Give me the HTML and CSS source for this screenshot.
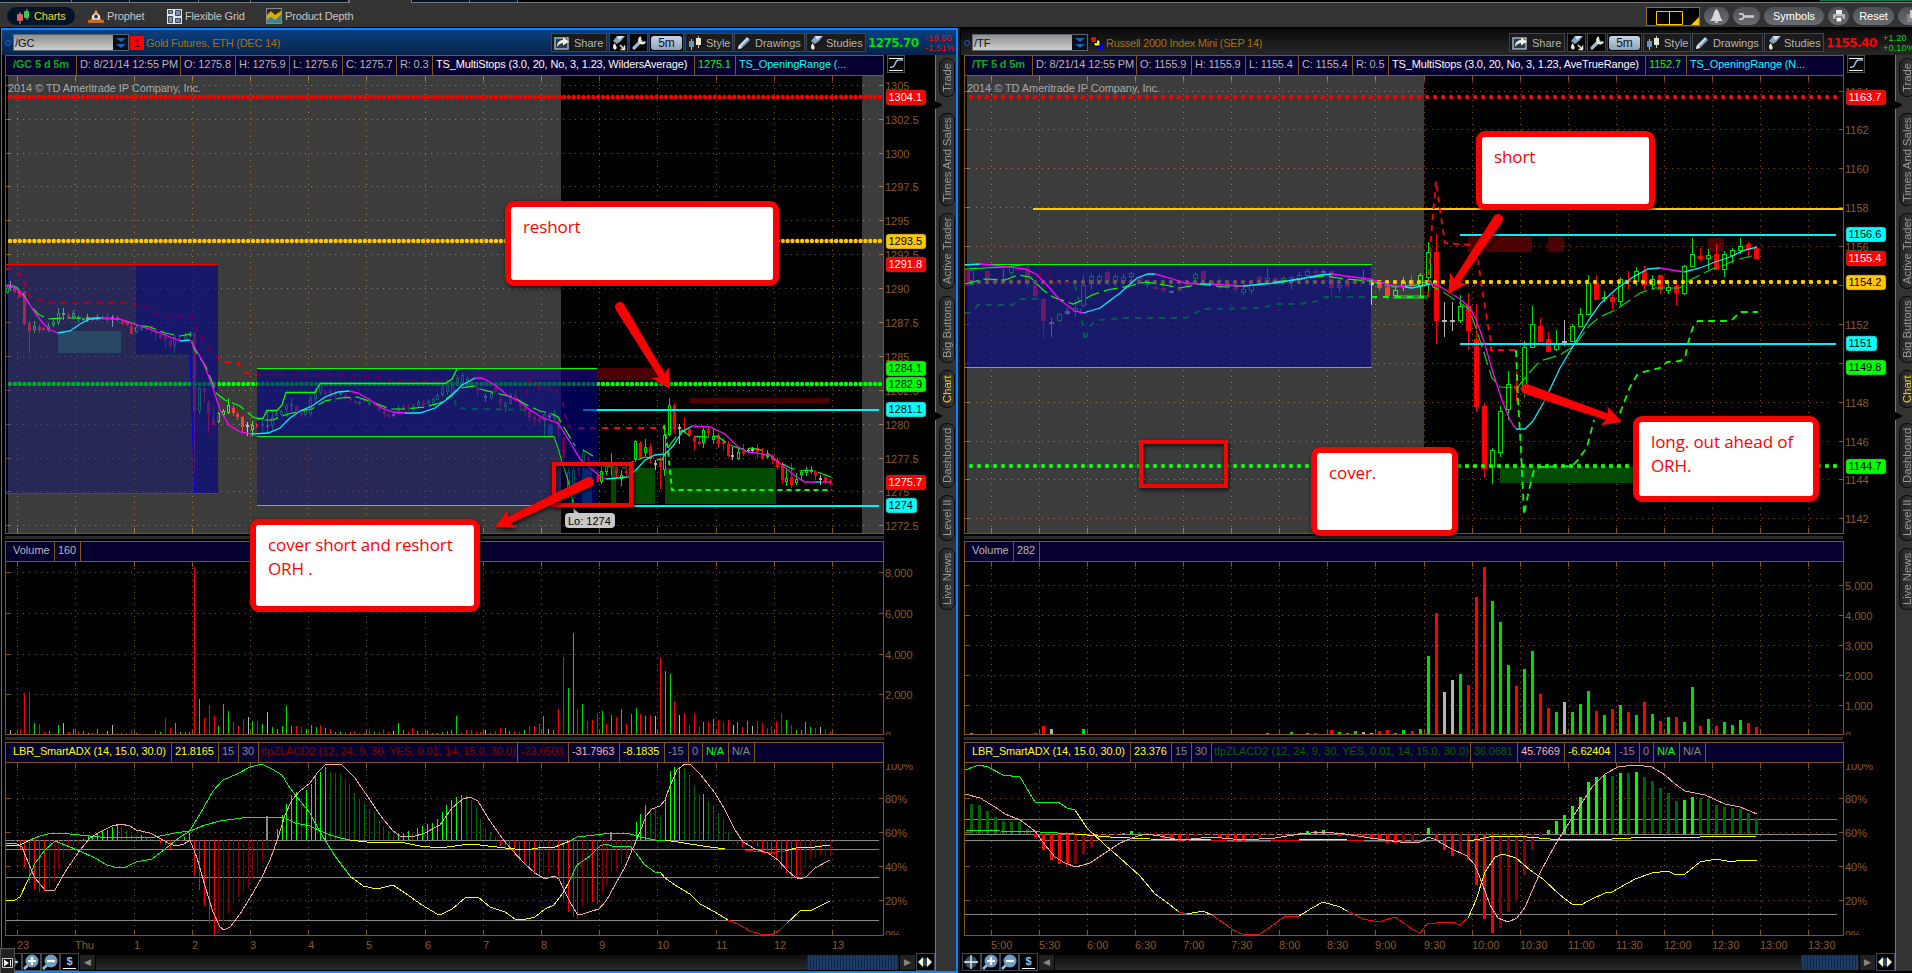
FILE: index.html
```
<!DOCTYPE html>
<html>
<head>
    <meta charset="utf-8">
    <title>Charts</title>
    <link rel="stylesheet" href="styles.css">
</head>
<body>
    <!-- Shared icons -->
    <svg class="defs" width="0" height="0">
        <symbol id="i-share" viewBox="0 0 16 14">
            <rect x="1" y="2" width="13" height="11" fill="#2b3c50" stroke="#9db4c8" stroke-width="1.5"/>
            <path d="M3 11C3 6 6 4 9 4V1.500l6 4-6 4V7C7 7 5 8 3 11z" fill="#f4f1dc"/>
        </symbol>
        <symbol id="i-spray" viewBox="0 0 16 16">
            <path d="M2 6L6 1h8l-4 5-4 3z" fill="#86a5c4"/>
            <path d="M6 1h7l-5 4z" fill="#d7e4ee"/>
            <path d="M3.500 8C1 12 2 14.500 4 14.500S6.500 12 3.500 8z" fill="#e9ecd8"/>
        </symbol>
        <symbol id="i-more" viewBox="0 0 16 16">
            <path d="M9 10l4 4M13.500 10.500v4h-4" stroke="#e9ecd8" stroke-width="1.500" fill="none"/>
        </symbol>
        <symbol id="i-wrench" viewBox="0 0 16 16">
            <path d="M3 13l7-7" stroke="#9fb8cf" stroke-width="3.200" stroke-linecap="round"/>
            <path d="M10 2.500a3 3 0 1 0 4 4" stroke="#e9ecd8" stroke-width="2.500" fill="none"/>
        </symbol>
        <symbol id="i-style" viewBox="0 0 14 14">
            <path d="M3.500 3v11M10.500 0v12" stroke="#b9c8d6" stroke-width="1"/>
            <rect x="1" y="5" width="5" height="6" fill="#6d93b8"/>
            <rect x="8" y="2" width="5" height="7" fill="#e6ead4"/>
        </symbol>
        <symbol id="i-pencil" viewBox="0 0 14 14">
            <path d="M1 13l1-4 8-8 3 3-8 8z" fill="#7ea4ca"/>
            <path d="M3 10l8-8" stroke="#dfe9f2" stroke-width="1.500"/>
            <path d="M1 13l1-4 3 3z" fill="#eee"/>
        </symbol>
        <symbol id="i-fit" viewBox="0 0 18 18">
            <rect x=".5" y=".5" width="17" height="17" fill="#000" stroke="#46535f"/>
            <path d="M2 3.500h14M2 15.500h14" stroke="#fffde0" stroke-width="1.200"/>
            <path d="M3 12c6 2 4-6 8-7h5" stroke="#8fc0ea" stroke-width="1.600" fill="none"/>
        </symbol>
        <symbol id="i-cross" viewBox="0 0 18 18">
            <circle cx="9" cy="9" r="6" fill="#33536f"/>
            <path d="M9 2v14M2 9h14" stroke="#f2f6e4" stroke-width="1.300"/>
        </symbol>
        <symbol id="i-plus" viewBox="0 0 18 18">
            <path d="M2 16l4-4" stroke="#9fc0dd" stroke-width="2.500"/>
            <circle cx="10" cy="8" r="6.500" fill="#6f9cc4"/>
            <path d="M10 4v8M6 8h8" stroke="#fffff0" stroke-width="2.200"/>
        </symbol>
        <symbol id="i-minus" viewBox="0 0 18 18">
            <path d="M2 16l4-4" stroke="#9fc0dd" stroke-width="2.500"/>
            <circle cx="10" cy="8" r="6.500" fill="#6f9cc4"/>
            <path d="M6 8h8" stroke="#fffff0" stroke-width="2.200"/>
        </symbol>
        <symbol id="i-expand" viewBox="0 0 18 18">
            <path d="M7 4v10L2 9zM11 4v10l5-5z" fill="#f0f4dd"/>
            <path d="M8 5v8M10 5v8" stroke="#5d8bbd"/>
        </symbol>
    </svg>

    <div class="tabstrip">
        <i class="tab"></i><i class="tab"></i><i class="tab"></i><i class="tab"></i><i class="tab"></i><i class="tab"></i>
        <i class="tab active"></i><i class="tab"></i><i class="tab"></i>
        <i class="strip-end"></i>
    </div>

    <div class="toolbar">
        <a class="tool selected">
            <svg width="15" height="15" viewBox="0 0 15 15"><path d="M4 3v12M11 0v11" stroke="#aaa"/><rect x="1" y="5" width="6" height="7" rx="1" fill="#e0605c"/><rect x="8" y="2" width="5" height="7" rx="1" fill="#35c94a"/></svg>
            Charts
        </a>
        <a class="tool prophet">
            <svg width="16" height="16" viewBox="0 0 16 16"><path d="M8 1l6 12H2z" fill="#e3b45c" stroke="#7a4a14"/><rect x="0" y="12" width="16" height="3" fill="#c96b22"/><ellipse cx="8" cy="8.500" rx="4" ry="2.500" fill="#fff"/><circle cx="8" cy="8.500" r="2" fill="#235"/></svg>
            Prophet
        </a>
        <a class="tool grid">
            <svg width="15" height="15" viewBox="0 0 15 15"><rect width="15" height="15" fill="#dfe6ee"/><path d="M1.500 1.500h4v3h-4zM8.500 1.500h5v5h-5zM1.500 7.500h4v6h-4zM8.500 9.500h5v4h-5z" fill="#7f8fa3" stroke="#3d4a5a"/></svg>
            Flexible Grid
        </a>
        <a class="tool depth">
            <svg width="16" height="16" viewBox="0 0 16 16"><rect x=".5" y=".5" width="15" height="15" fill="#2c2c22" stroke="#888"/><path d="M1 12l4-3 4 2 6-4v8H1z" fill="#3c8290"/><path d="M1 7l4-4 4 4 6-4v4l-6 5-4-3-4 3z" fill="#dba90f"/></svg>
            Product Depth
        </a>
        <div class="tool-right">
            <svg class="layout-box" width="54" height="19" viewBox="0 0 54 19"><rect x=".5" y=".5" width="53" height="18" fill="#000" stroke="#9b6d00"/><path d="M10.500 4.500h26v13h-26zM23.500 4.500v13" fill="none" stroke="#ffc800"/><path d="M53 10v8h-8z" fill="#ffc800"/></svg>
            <span class="round bell"><svg width="15" height="15" viewBox="0 0 15 15"><path d="M7.500 0C4 2 5 8 1 12h13C10 8 11 2 7.500 0z" fill="#d8d8d8"/><rect x="6" y="12" width="3" height="2" fill="#bbb"/></svg></span>
            <span class="round wr"><svg width="17" height="9" viewBox="0 0 17 9"><path d="M1 1.800h3.500l1.500 2.700-1.500 2.700H1" stroke="#ccc" stroke-width="1.800" fill="none"/><path d="M6 4.500h10" stroke="#ccc" stroke-width="2.500"/></svg></span>
            <span class="round sym">Symbols</span>
            <span class="round prn"><svg width="12" height="12" viewBox="0 0 12 12"><path d="M3 0h6v4H3z" fill="#eee"/><rect y="4" width="12" height="5" rx="1" fill="#bbb"/><path d="M3 7h6v5H3z" fill="#fff" stroke="#444"/></svg></span>
            <span class="round rst">Reset</span>
            <span class="round more"><svg width="12" height="12" viewBox="0 0 12 12"><rect y="4" width="8" height="8" fill="#888"/><rect x="3" width="9" height="8" fill="#ccc"/></svg></span>
        </div>
    </div>

    <div class="workspace">
        <!-- Gold -->
        <div class="panel current">
            <div class="panel-head">
                <i class="link-dot"></i>
                <div class="symbol"><span>/GC</span><i class="drop"></i></div>
                <b class="link-num">1</b>
                <span class="title">Gold Futures, ETH (DEC 14)</span>
                <div class="head-buttons">
                    <a class="btn share"><svg width="16" height="14"><use href="#i-share"/></svg>Share</a>
                    <a class="btn icon"><svg width="16" height="16"><use href="#i-spray"/><use href="#i-more"/></svg></a>
                    <a class="btn icon"><svg width="16" height="16"><use href="#i-wrench"/></svg></a>
                    <a class="btn period"><span>5m</span></a>
                    <a class="btn style"><svg width="14" height="14"><use href="#i-style"/></svg>Style</a>
                    <a class="btn drawings"><svg width="14" height="14"><use href="#i-pencil"/></svg>Drawings</a>
                    <a class="btn studies"><svg width="16" height="16"><use href="#i-spray"/></svg>Studies</a>
                </div>
                <b class="last up">1275.70</b>
                <span class="change down">-19.50<br>-1.51%</span>
            </div>
            <div class="panel-body">
                <div class="main">
                    <div class="row">
                        <div class="bar" id="info-gc"></div>
                        <svg class="fit" width="18" height="18"><use href="#i-fit"/></svg>
                    </div>
                    <svg class="plot" id="price-gc" width="930" height="458" viewBox="5 76 930 458"></svg>
                    <div class="splitter"></div>
                    <div class="bar" id="volbar-gc"></div>
                    <svg class="plot" id="vol-gc" width="930" height="173" viewBox="5 562 930 173"></svg>
                    <div class="splitter"></div>
                    <div class="bar" id="adxbar-gc"></div>
                    <svg class="plot" id="adx-gc" width="930" height="190" viewBox="5 763 930 190"></svg>
                    <div class="scroll">
                        <a class="sbtn first"><svg width="18" height="18"><use href="#i-cross"/></svg></a>
                        <a class="sbtn"><svg width="18" height="18"><use href="#i-plus"/></svg></a>
                        <a class="sbtn"><svg width="18" height="18"><use href="#i-minus"/></svg></a>
                        <a class="sbtn dollar">$</a>
                        <a class="arrow">&#9664;</a>
                        <div class="track"><i class="thumb"></i></div>
                        <a class="arrow">&#9654;</a>
                        <a class="sbtn"><svg width="18" height="18"><use href="#i-expand"/></svg></a>
                    </div>
                </div>
                <div class="side">
                    <a>Trade</a><a>Times And Sales</a><a>Active Trader</a><a>Big Buttons</a><a class="on">Chart</a><a>Dashboard</a><a>Level II</a><a>Live News</a>
                </div>
            </div>
        </div>

        <div class="gutter"></div>

        <!-- Russell -->
        <div class="panel second">
            <div class="panel-head">
                <i class="link-dot"></i>
                <div class="symbol"><span>/TF</span><i class="drop"></i></div>
                <svg class="link-multi" width="14" height="14" viewBox="0 0 14 14"><rect x="7" y="7" width="6" height="6" fill="#00f"/><rect x="4" y="4" width="6" height="6" fill="#ff0" stroke="#000"/><rect x=".5" y=".5" width="6" height="6" fill="#f00" stroke="#000"/></svg>
                <span class="title">Russell 2000 Index Mini (SEP 14)</span>
                <div class="head-buttons">
                    <a class="btn share"><svg width="16" height="14"><use href="#i-share"/></svg>Share</a>
                    <a class="btn icon"><svg width="16" height="16"><use href="#i-spray"/><use href="#i-more"/></svg></a>
                    <a class="btn icon"><svg width="16" height="16"><use href="#i-wrench"/></svg></a>
                    <a class="btn period"><span>5m</span></a>
                    <a class="btn style"><svg width="14" height="14"><use href="#i-style"/></svg>Style</a>
                    <a class="btn drawings"><svg width="14" height="14"><use href="#i-pencil"/></svg>Drawings</a>
                    <a class="btn studies"><svg width="16" height="16"><use href="#i-spray"/></svg>Studies</a>
                </div>
                <b class="last down">1155.40</b>
                <span class="change up">+1.20<br>+0.10%</span>
            </div>
            <div class="panel-body">
                <div class="main">
                    <div class="row">
                        <div class="bar" id="info-tf"></div>
                        <svg class="fit" width="18" height="18"><use href="#i-fit"/></svg>
                    </div>
                    <svg class="plot" id="price-tf" width="931" height="458" viewBox="964 76 931 458"></svg>
                    <div class="splitter"></div>
                    <div class="bar" id="volbar-tf"></div>
                    <svg class="plot" id="vol-tf" width="931" height="173" viewBox="964 562 931 173"></svg>
                    <div class="splitter"></div>
                    <div class="bar" id="adxbar-tf"></div>
                    <svg class="plot" id="adx-tf" width="931" height="190" viewBox="964 763 931 190"></svg>
                    <div class="scroll">
                        <a class="sbtn"><svg width="18" height="18"><use href="#i-cross"/></svg></a>
                        <a class="sbtn"><svg width="18" height="18"><use href="#i-plus"/></svg></a>
                        <a class="sbtn"><svg width="18" height="18"><use href="#i-minus"/></svg></a>
                        <a class="sbtn dollar">$</a>
                        <a class="arrow">&#9664;</a>
                        <div class="track"><i class="thumb"></i></div>
                        <a class="arrow">&#9654;</a>
                        <a class="sbtn"><svg width="18" height="18"><use href="#i-expand"/></svg></a>
                    </div>
                </div>
                <div class="side">
                    <a>Trade</a><a>Times And Sales</a><a>Active Trader</a><a>Big Buttons</a><a class="on">Chart</a><a>Dashboard</a><a>Level II</a><a>Live News</a>
                </div>
            </div>
        </div>
    </div>

    <svg class="opener" width="15" height="25" viewBox="0 0 15 25"><rect x=".5" y=".5" width="14" height="26" fill="#222" stroke="#555"/><path d="M2.500 10.500h10v9h-10z" fill="#111" stroke="#ccc"/><path d="M4 11.500v7l5-3.500z" fill="#eee"/><path d="M10.500 12v6" stroke="#eee"/></svg>

    <!-- Annotations -->
    <div class="mark mark-gc"></div>
    <div class="mark mark-tf"></div>
    <svg class="arrows" width="1912" height="973" viewBox="0 0 1912 973" id="arrows"></svg>
    <div class="note reshort">reshort</div>
    <div class="note cover-short">cover short and reshort<br>ORH .</div>
    <div class="note short">short</div>
    <div class="note cover">cover.</div>
    <div class="note long">long. out ahead of<br>ORH.</div>

    <script src="script.js"></script>
</body>
</html>
```

FILE: styles.css
```
* {
    box-sizing: border-box;
}

body {
    margin: 0;
    width: 1912px;
    height: 973px;
    overflow: hidden;
    background: #000;
    color: #b8b8b8;
    font: 11px "Liberation Sans", Arial, sans-serif;
    position: relative;
}

.defs {
    position: absolute;
}

/* top strip */
.tabstrip {
    display: flex;
    height: 3px;
    background: #000;
    border-bottom: 1px solid #777;
}

.tab {
    background: #001428;
    border-right: 1px solid #777;
    width: 58px;
}

.tab:nth-child(1) { width: 72px; }
.tab:nth-child(3) { width: 69px; }
.tab:nth-child(4) { width: 52px; }
.tab:nth-child(5) { width: 98px; }
.tab:nth-child(6) { width: 1px; }
.tab.active { width: 62px; height: 3px; background: #333; }
.tab:nth-child(9) { width: 48px; }

.strip-end {
    margin-left: auto;
    width: 92px;
    height: 1px;
    background: #0d7a4a;
}

.toolbar {
    display: flex;
    align-items: center;
    height: 24px;
    padding: 2px 0 0 7px;
    background: #333;
    color: #c4c4c4;
    overflow: hidden;
}

.tool {
    display: flex;
    align-items: center;
    gap: 3px;
    height: 18px;
    white-space: nowrap;
    letter-spacing: -.15px;
}

.tool.selected {
    width: 68px;
    padding-left: 9px;
    background: #001428;
    border-radius: 9px;
    color: #ffd21e;
}

.tool.prophet { margin-left: 13px; width: 79px; }
.tool.grid { width: 99px; }

.tool-right {
    display: flex;
    align-items: center;
    gap: 4px;
    margin-left: auto;
    flex: none;
    width: 266px;
    color: #fff;
}

.round {
    display: flex;
    flex: none;
    align-items: center;
    justify-content: center;
    height: 18px;
    border-radius: 9px;
    background: linear-gradient(#4c5156, #6a6e72);
}

.layout-box { flex: none; }
.bell { width: 25px; }
.wr { width: 27px; }
.sym { width: 60px; }
.prn { width: 21px; }
.rst { width: 41px; }
.more { width: 30px; }

/* panels */
.workspace {
    display: flex;
    margin-top: 1px;
    height: 945px;
}

.panel {
    flex: none;
    width: 957px;
    height: 945px;
    display: flex;
    flex-direction: column;
}

.panel.current {
    margin-left: 1px;
    border: 2px solid #0a84ff;
    border-left-width: 1px;
}

.panel.second {
    padding: 2px 2px 2px 1px;
}

.gutter {
    flex: none;
    width: 2px;
    background: #1c1c1c;
    background-image: radial-gradient(#555 .5px, transparent .7px);
    background-size: 2px 2px;
}

.panel-head {
    display: flex;
    align-items: center;
    height: 25px;
    flex: none;
    padding-left: 3px;
    background: linear-gradient(#0b3f80, #06244a);
}

.second .panel-head {
    padding-right: 1px;
    background: linear-gradient(#0c0c0c, #272727);
}

.link-dot {
    width: 6px;
    height: 6px;
    border: 1.500px solid #1562c0;
    border-radius: 50%;
    margin-right: 2px;
}

.symbol {
    display: flex;
    width: 116px;
    height: 17px;
    border: 1px solid #5a6572;
    background: linear-gradient(#909090, #cfcfcf);
    color: #111;
    font-size: 11px;
    line-height: 16px;
}

.symbol span {
    flex: 1;
    padding-left: 1px;
}

.drop {
    width: 15px;
    background: #0a0f16;
    position: relative;
}

.drop::before, .drop::after {
    content: "";
    position: absolute;
    left: 3px;
    top: 3px;
    border: 5px solid transparent;
    border-top: 4px solid #1c63b5;
    border-bottom: 0;
}

.drop::after {
    top: 9px;
}

.link-num {
    width: 14px;
    height: 14px;
    margin-left: 1px;
    background: #f00;
    color: #000;
    text-align: center;
    font-weight: normal;
    line-height: 15px;
}

.link-multi {
    margin-left: 2px;
}

.title {
    flex: 1;
    padding-left: 2px;
    color: #a87010;
    letter-spacing: -.25px;
    white-space: nowrap;
}

.head-buttons {
    display: flex;
    gap: 1px;
}

.btn {
    display: flex;
    align-items: center;
    gap: 4px;
    height: 19px;
    padding-left: 2px;
    background: #1b1b1b;
    border: 1px solid #3b4652;
    color: #b4b4b4;
}

.btn.share { width: 56px; margin-right: 1px; }
.btn.icon { width: 19px; padding-left: 1px; background: #000; }
.btn.period { width: 35px; background: #000; padding: 0 1px; }
.btn.style { width: 48px; }
.btn.drawings { width: 71px; }
.btn.studies { width: 60px; gap: 1px; }

.btn.period span {
    flex: 1;
    height: 14px;
    border-radius: 3px;
    background: linear-gradient(#c5d6e6, #8ba3ba);
    color: #112;
    text-align: center;
    line-height: 15px;
    font-size: 12px;
}

.last {
    width: 59px;
    padding-left: 2px;
    font: bold 12px "DejaVu Sans", sans-serif;
    letter-spacing: -.6px;
}

.change {
    width: 31px;
    font-size: 9px;
    line-height: 10px;
    letter-spacing: .2px;
    white-space: nowrap;
}

.up { color: #00dc00; }
.down { color: #f00; }

.panel-body {
    display: flex;
    flex: 1;
}

.main {
    width: 933px;
    padding-left: 3px;
    flex: none;
}

.second .main {
    width: 934px;
}

.row {
    display: flex;
    height: 21px;
}

.fit {
    margin-left: 3px;
}

.bar {
    display: flex;
    width: 879px;
    height: 21px;
    background: #06002e;
    border: 1px solid #815618;
    border-width: 1px 1px 1px 0;
    line-height: 17px;
    letter-spacing: -.15px;
    overflow: hidden;
    white-space: nowrap;
}

.second .bar {
    width: 880px;
}

.bar span {
    flex: none;
    border-left: 1px solid #815618;
    padding-left: 3px;
}

.bar span:first-child {
    padding-left: 7px;
}

.bar .wide {
    padding-left: 2px;
    letter-spacing: 0;
}

.plot {
    display: block;
}

.plot text {
    font: 11px "Liberation Sans", Arial, sans-serif;
    fill: #8a5c22;
}

.splitter {
    width: 879px;
    height: 7px;
    border: solid #000;
    border-width: 2px 0;
    background: radial-gradient(#666 .5px, #111 .8px) 0 0 / 2px 1.500px repeat padding-box;
}

.scroll {
    display: flex;
    align-items: center;
    height: 18px;
    margin-left: -3px;
}

.second .scroll {
    margin-left: -2px;
}

.sbtn {
    flex: none;
    display: block;
    width: 19px;
    height: 18px;
    background: #000;
    border: 1px solid #3b4a5c;
}

.sbtn.first {
    width: 20px;
}

.sbtn svg {
    display: block;
    margin: -1px;
}

.dollar {
    text-align: center;
    color: #8cc0ee;
    font-weight: bold;
    line-height: 14px;
}

.dollar::after {
    content: "";
    display: block;
    height: 1px;
    margin: 0 2px;
    background: #fff;
}

.arrow {
    flex: none;
    width: 15px;
    height: 15px;
    margin: 0 1px;
    background: #222;
    color: #888;
    font: 9px/15px "DejaVu Sans", sans-serif;
    text-align: center;
}

.track {
    flex: 1;
    height: 15px;
    padding-right: 1px;
    background: linear-gradient(#0c0c0c, #2a2a2a);
}

.thumb {
    display: block;
    margin-left: auto;
    width: 91px;
    height: 15px;
    background: repeating-linear-gradient(90deg, #12284a 0 1px, #1a3c66 1px 3px);
}

.second .thumb {
    width: 57px;
}

/* right hand gadget tabs */
.side {
    flex: none;
    width: 21px;
    padding: 3px 0 0 3px;
    background: #333;
    border-left: 1px solid #777;
    position: relative;
}

.side a {
    display: flex;
    align-items: center;
    justify-content: center;
    width: 16px;
    margin-bottom: 7px;
    border: 1px solid #0a0a0a;
    border-radius: 7px;
    background: linear-gradient(90deg, #3a3a3a, #222);
    color: #999;
    writing-mode: vertical-rl;
    transform: rotate(180deg);
    white-space: nowrap;
    font-size: 11.300px;
}

.side .on { color: #ffc800; }
.side a:nth-child(1) { height: 39px; margin-bottom: 16px; }
.side a:nth-child(2) { height: 93px; }
.side a:nth-child(3) { height: 76px; }
.side a:nth-child(4) { height: 67px; }
.side a:nth-child(5) { height: 38px; margin-bottom: 15px; }
.side a:nth-child(6) { height: 65px; }
.side a:nth-child(7) { height: 46px; }
.side a:nth-child(8) { height: 62px; }

.side::before, .side::after {
    content: "";
    position: absolute;
    left: -1px;
    top: 46px;
    border: 4px solid transparent;
    border-left: 8px solid #000;
}

.side::after {
    top: 357px;
}

.opener {
    position: absolute;
    left: 0;
    top: 948px;
}

/* annotations drawn over the charts */
.arrows {
    position: absolute;
    left: 0;
    top: 0;
    filter: drop-shadow(1px 2px 2px rgba(0, 0, 0, .7));
}

.mark {
    position: absolute;
    border: 4px solid #f00;
    filter: drop-shadow(1px 2px 2px rgba(0, 0, 0, .8));
}

.mark-gc { left: 552px; top: 462px; width: 81px; height: 45px; }
.mark-tf { left: 1139px; top: 440px; width: 89px; height: 48px; }

.note {
    position: absolute;
    border: 6px solid #f00;
    border-radius: 9px;
    background: #fff;
    color: #f00;
    padding: 8px 12px;
    font: 17px/24px "Open Sans", "Noto Sans", sans-serif;
    letter-spacing: -.1px;
    white-space: nowrap;
    box-shadow: 1px 2px 4px rgba(0, 0, 0, .7);
}

.reshort { left: 505px; top: 201px; width: 274px; height: 85px; }
.cover-short { left: 250px; top: 519px; width: 230px; height: 93px; }
.short { left: 1476px; top: 131px; width: 179px; height: 79px; }
.cover { left: 1311px; top: 447px; width: 147px; height: 89px; }
.long { left: 1633px; top: 416px; width: 186px; height: 86px; }
```

FILE: script.js
```
const BROWN = '#815618';
const COLORS = {
    r: '#f00', g: '#00dc00', w: '#b4b4b4',
    G: '#0f0', D: '#006400', R: '#f00', M: '#820000',
    y: '#ff0', m: '#f0f', c: '#00f0ff', p: '#f4a6a6', k: '#888'
};

// ---------- header bars ----------
function fillBar(id, cells) {
    document.getElementById(id).innerHTML = cells.map(([text, width, color, cls = '']) =>
        `<span class="${cls}" style="width:${width}px;color:${color}">${text}</span>`).join('');
}

fillBar('info-gc', [
    ['<b>/GC 5 d 5m</b>', 71, '#00aa28'], ['D: 8/21/14 12:55 PM', 104, '#b8b8b8'], ['O: 1275.8', 55, '#b8b8b8'],
    ['H: 1275.9', 54, '#b8b8b8'], ['L: 1275.6', 53, '#b8b8b8'], ['C: 1275.7', 54, '#b8b8b8'], ['R: 0.3', 36, '#b8b8b8'],
    ['TS_MultiStops (3.0, 20, No, 3, 1.23, WildersAverage)', 262, '#fff'], ['1275.1', 41, '#0f0'], ['TS_OpeningRange (...', 148, '#0ff']
]);
fillBar('info-tf', [
    ['<b>/TF 5 d 5m</b>', 68, '#00aa28'], ['D: 8/21/14 12:55 PM', 104, '#b8b8b8'], ['O: 1155.9', 55, '#b8b8b8'],
    ['H: 1155.9', 54, '#b8b8b8'], ['L: 1155.4', 53, '#b8b8b8'], ['C: 1155.4', 54, '#b8b8b8'], ['R: 0.5', 36, '#b8b8b8'],
    ['TS_MultiStops (3.0, 20, No, 3, 1.23, AveTrueRange)', 257, '#fff'], ['1152.7', 41, '#0f0'], ['TS_OpeningRange (N...', 157, '#0ff']
]);
fillBar('volbar-gc', [['Volume', 49, '#b8b8b8', 'wide'], ['160', 26, '#b8b8b8'], ['', 804, '']]);
fillBar('volbar-tf', [['Volume', 49, '#b8b8b8', 'wide'], ['282', 26, '#b8b8b8'], ['', 805, '']]);
fillBar('adxbar-gc', [
    ['LBR_SmartADX (14, 15.0, 30.0)', 166, '#ff0'], ['21.8165', 47, '#ff0'], ['15', 20, '#888'], ['30', 20, '#888'],
    ['tfpZLACD2 (12, 24, 9, 30, YES, 0.01, 14, 15.0, 30.0)', 259, '#820000', 'wide'], ['-23.6503', 51, '#820000'],
    ['-31.7963', 51, '#ffb0b0'], ['-8.1835', 45, '#ff0'], ['-15', 24, '#888'], ['0', 14, '#888'],
    ['N/A', 26, '#0f0'], ['N/A', 26, '#888'], ['', 130, '']
]);
fillBar('adxbar-tf', [
    ['LBR_SmartADX (14, 15.0, 30.0)', 166, '#ff0'], ['23.376', 41, '#ff0'], ['15', 20, '#888'], ['30', 20, '#888'],
    ['tfpZLACD2 (12, 24, 9, 30, YES, 0.01, 14, 15.0, 30.0)', 259, '#006400', 'wide'], ['36.0681', 47, '#006400'],
    ['45.7669', 47, '#ffb0b0'], ['-6.62404', 51, '#ff0'], ['-15', 24, '#888'], ['0', 14, '#888'],
    ['N/A', 26, '#0f0'], ['N/A', 26, '#888'], ['', 139, '']
]);

// ---------- drawing helpers ----------
function rect(x, y, x2, y2, fill) {
    return `<rect x="${x}" y="${y}" width="${x2 - x}" height="${y2 - y}" fill="${fill}" shape-rendering="crispEdges"/>`;
}

function hline(x, x2, y, color, w = 1) {
    return rect(x, y, x2, y + w, color);
}

function line(points, color, extra = '') {
    return `<polyline points="${points}" fill="none" stroke="${color}" ${extra}/>`;
}

// line made of coloured segments, each one starts where the last ended
function multiLine(segments, extra = '') {
    let last = '';
    return segments.map(([c, points]) => {
        const out = line(last + ' ' + points, COLORS[c], extra);
        last = points.split(' ').pop();
        return out;
    }).join('');
}

function dots(x, x2, y, step, color) {
    return `<path d="M${x} ${y}H${x2}" stroke="${color}" stroke-width="4.400" stroke-linecap="round" stroke-dasharray="0 ${step}"/>`;
}

// grid, frame, ticks and axis labels
function frame(o) {
    let s = '';
    o.xs.forEach(x => {
        s += `<path d="M${x}.5 ${o.top + 6}V${o.bottom}" stroke="${BROWN}" stroke-dasharray="1 5" shape-rendering="crispEdges"/>`;
        s += rect(x, o.top, x + 1, o.top + 5, BROWN) + rect(x, o.bottom - 5, x + 1, o.bottom, BROWN);
    });
    o.ys.forEach(([y, text]) => {
        if (y > o.top + 4 && y < o.bottom - 2) {
            s += `<path d="M${o.left + 12} ${y}.5H${o.right - 12}" stroke="${BROWN}" stroke-dasharray="1 5" shape-rendering="crispEdges"/>`;
            s += hline(o.left, o.left + 6, y, BROWN) + hline(o.right - 4, o.right, y, BROWN);
        }
        if (text) s += `<text x="${o.right + 2}" y="${y + 5}">${text}</text>`;
    });
    s += rect(o.left, o.top, o.left + 1, o.bottom, BROWN) + rect(o.right, o.top, o.right + 1, o.bottom + 1, BROWN);
    return s + hline(o.left, o.right, o.bottom, BROWN);
}

function candles(data, w) {
    return data.trim().split(/\s*;\s*/).map(row => {
        const [x, h, l, t, b, c] = row.split(' ');
        const color = COLORS[c], half = (w - 1) / 2;
        let s = '';
        if (c === 'g') {
            s += rect(+x, +h, +x + 1, +t, color) + rect(+x, +b, +x + 1, +l, color);
            s += `<rect x="${+x - half + .5}" y="${+t + .5}" width="${w - 1}" height="${Math.max(b - t - 1, 1)}" fill="none" stroke="${color}" shape-rendering="crispEdges"/>`;
        } else {
            s += rect(+x, +h, +x + 1, +l, color) + rect(x - half, +t, +x + half + 1, Math.max(+b, +t + 1), color);
        }
        return s;
    }).join('');
}

// "x:height+colour" list, negative heights hang below the base
function bars(data, base, w) {
    const half = (w - 1) / 2;
    return data.trim().split(/\s+/).map(item => {
        const [, x, v, c] = item.match(/^(\d+):(-?\d+)(\w)$/);
        return v > 0 ? rect(x - half, base - v, +x + half + 1, base, COLORS[c]) : rect(x - half, base, +x + half + 1, base - v, COLORS[c]);
    }).join('');
}

function tags(x, list) {
    return list.map(([y, text, bg]) => {
        const w = text.length > 4 ? 40 : 31;
        return `<rect x="${x}" y="${y - 7}" width="${w}" height="15" rx="3" fill="${bg}" stroke="#555" stroke-opacity=".5"/>` +
            `<text x="${x + 2.5}" y="${y + 4}" style="fill:${bg === '#f00' ? '#fff' : '#000'}">${text}</text>`;
    }).join('');
}

function draw(id, html) {
    document.getElementById(id).innerHTML = html;
}

const SESSION = 'rgba(255,255,255,.235)';
const RED_DASH = 'stroke-width="2" stroke-dasharray="6 6"';
const MA_DASH = 'stroke-width="1.200" stroke-dasharray="14 5"';
const MA = 'stroke-width="1.300"';
const CRISP = 'shape-rendering="crispEdges"';

// ---------- gold: price ----------
const gcX = [17, 75, 134, 192, 250, 308, 366, 425, 483, 541, 599, 657, 716, 774, 832];
const gcCandles = `
7 286 294 288 293 g; 10 281 291 287 288 w; 14 287 293 288 292 r; 19 289 298 290 297 r; 24 291 325 291 324 r; 29 321 353 323 331 r;
34 321 333 326 330 g; 39 325 333 327 330 r; 43 327 331 328 330 r; 48 323 332 326 330 g; 53 320 327 322 325 g; 58 308 325 313 323 g;
63 308 320 313 315 w; 68 313 319 315 317 r; 73 310 319 313 317 g; 78 315 322 317 319 g; 83 318 321 318 320 g; 87 314 322 317 320 w;
92 317 322 318 320 r; 97 314 321 317 319 g; 102 316 320 317 319 g; 107 313 323 317 320 r; 112 315 327 317 319 w; 117 315 322 317 319 r;
122 319 325 320 324 r; 127 321 326 322 325 r; 131 324 334 326 334 r; 136 325 334 327 332 g; 141 325 331 327 330 g; 146 325 331 326 329 r;
151 325 335 326 330 r; 155 328 341 330 333 r; 160 334 340 335 338 r; 165 333 349 335 340 r; 170 338 349 340 346 r; 174 335 353 337 346 g;
179 336 342 338 341 r; 185 332 341 335 340 g; 190 331 335 332 334 g; 194 333 493 333 411 r; 199 387 414 388 411 g; 204 387 403 388 392 r;
208 400 433 402 413 r; 213 406 425 420 425 r; 218 412 423 413 422 g; 223 409 416 411 415 g; 228 398 414 405 413 g; 233 405 416 408 413 r;
237 412 420 414 417 r; 242 416 432 417 427 r; 247 422 436 425 427 w; 252 421 436 425 430 g; 257 423 428 424 427 r; 262 420 432 424 426 g;
267 412 433 425 427 w; 272 412 430 417 426 g; 276 410 418 413 416 g; 281 409 417 411 415 g; 286 403 417 405 410 g; 291 398 412 404 406 g;
296 405 413 406 411 r; 301 411 418 412 415 r; 305 409 417 410 415 g; 310 395 417 398 414 g; 315 388 403 391 399 g; 320 383 395 385 393 g;
325 390 395 392 394 r; 330 389 398 391 397 r; 335 391 402 393 396 r; 340 392 396 393 395 g; 345 393 399 395 398 r; 350 397 402 398 400 r;
355 400 404 401 403 r; 359 401 405 402 404 g; 364 399 403 400 402 r; 369 398 406 402 405 g; 374 402 407 403 405 r; 379 404 412 405 410 r;
384 407 418 409 414 r; 388 413 418 414 417 r; 393 411 417 414 416 w; 398 405 414 408 411 g; 403 404 410 406 409 r; 408 404 411 407 409 r;
413 404 412 406 409 g; 418 400 408 402 406 g; 423 400 406 402 405 r; 428 399 405 401 404 g; 433 397 406 399 405 g; 437 393 400 395 400 g;
442 385 397 387 395 g; 447 379 395 381 392 g; 452 384 398 385 395 g; 457 375 386 378 385 g; 462 372 386 375 384 g; 467 375 388 378 387 g;
472 379 388 382 386 r; 477 385 397 387 390 r; 485 394 402 396 398 w; 491 390 400 393 398 g; 495 385 394 387 392 r; 500 397 410 399 403 r;
505 401 412 403 407 g; 510 393 405 395 404 g; 515 390 402 395 401 r; 520 399 409 402 406 r; 525 403 415 406 411 r; 529 409 421 411 418 r;
534 415 425 417 419 r; 539 415 425 418 421 r; 544 412 436 414 421 g; 549 413 419 415 418 w; 554 410 421 414 418 g; 558 417 437 420 429 r;
563 433 465 437 458 r; 568 468 499 472 493 g; 573 466 506 470 498 g; 578 465 475 467 471 r; 583 449 470 453 466 g; 588 455 466 457 462 r;
593 461 471 463 470 r; 597 470 483 476 482 r; 601 465 484 471 482 g; 606 462 475 466 472 g; 611 453 475 465 468 g; 616 463 478 467 473 r;
621 470 486 475 479 g; 626 468 476 471 473 r; 631 462 473 466 471 g; 635 440 462 441 460 g; 640 441 459 443 458 r; 645 439 456 447 453 g;
650 443 463 447 459 r; 655 460 470 463 465 w; 660 457 489 462 467 r; 664 425 476 435 470 g; 669 398 436 405 435 g; 674 403 433 405 430 r;
679 424 444 427 429 w; 684 418 434 430 432 r; 689 427 437 429 435 r; 694 435 450 437 442 r; 699 438 445 442 444 r; 703 428 448 430 443 g;
708 427 436 429 433 r; 713 428 444 436 440 g; 718 433 448 435 444 r; 723 438 450 442 444 r; 728 441 457 444 456 r; 732 447 460 455 457 w;
738 449 460 452 459 g; 743 444 456 451 453 r; 748 448 453 450 451 w; 752 447 453 449 451 w; 757 444 458 448 452 r; 762 448 460 454 458 r;
767 450 459 455 457 g; 772 454 464 456 460 r; 777 458 470 460 467 r; 782 462 484 466 480 r; 786 468 486 478 482 g; 791 463 488 477 485 r;
796 473 485 479 483 g; 801 470 481 472 475 g; 806 467 476 470 473 g; 811 466 474 470 472 g; 815 470 480 471 475 r; 820 475 485 478 480 w;
825 474 484 477 482 r; 830 479 485 481 483 r`;

draw('price-gc',
    frame({
        left: 5, right: 883, top: 76, bottom: 533, xs: gcX,
        ys: [[85, '1305'], [119, '1302.5'], [153, '1300'], [186, '1297.5'], [220, '1295'], [254, '1292.5'], [288, '1290'],
            [322, '1287.5'], [356, '1285'], [390, '1282.5'], [424, '1280'], [458, '1277.5'], [491, '1275'], [525, '1272.5']]
    }) +
    rect(58, 331, 121, 353, 'rgba(0,110,50,.6)') + rect(597, 368, 665, 380, '#4c0000') + rect(471, 368, 597, 380, 'rgba(90,0,30,.6)') +
    rect(689, 398, 830, 403, '#4c0000') + rect(611, 468, 616, 504, '#004c00') + rect(633, 468, 655, 504, '#004c00') +
    rect(665, 468, 776, 504, '#004c00') + rect(582, 468, 592, 503, '#006450') + rect(548, 425, 553, 436, '#006450') +
    candles(gcCandles, 3) +
    // extended hours
    rect(8, 76, 561, 533, SESSION) + rect(862, 76, 883, 533, SESSION) +
    dots(10, 880, 97, 4.86, '#f00') + dots(10, 880, 241, 4.86, '#ffc800') + dots(10, 880, 384, 4.86, '#0f0') +
    line('6,269 11,269 18,273 24,279 27,292 31,297 38,299 45,303 132,303 140,306 148,307 155,313 162,316 192,317 197,331 205,343 215,355 223,362 238,363 246,373 252,375 375,376 385,378 392,381 448,381', '#f00', RED_DASH) +
    line('526,395 529,380 534,383 540,389 556,389 562,398 567,425 572,428 664,428', '#f00', RED_DASH) +
    line('454,388 456,408 480,409 528,410', '#00dc00', RED_DASH) +
    hline(583, 879, 409, '#00f0ff', 2) +
    // opening range boxes
    rect(6, 265, 218, 493, 'rgba(0,0,140,.33)') +
    '<polygon points="136,265 218,265 218,493 194,493 190,353 136,353" fill="rgba(0,0,140,.4)"/>' +
    '<rect x="257" y="369" width="340" height="137" fill="rgba(0,0,140,.33)"/>' +
    '<polygon points="257,369 597,369 597,506 573,506 568,480 562,460 554,436 257,436" fill="rgba(0,0,140,.4)"/>' +
    line('136,353.5 190,353.5 194.5,493', '#00f') +
    hline(6, 218, 264, '#f00') + hline(6, 218, 493, '#f00') +
    hline(257, 597, 368, '#0f0') + hline(257, 572, 505, '#0f0') + hline(634, 879, 505, '#00f0ff', 2) +
    line('257,436.5 554,436.5 558,448 562,462 568,480 573,503', '#0f0') +
    line('257,418.5 263,418.5 267,410.5 277,410.5 282,405 286,392.5 315,392.5 320,383.5 445,383.5 452,379 457,369', '#0f0', MA) +
    line('664,425 668,450 672,490 832,490', '#0f0', 'stroke-width="2" stroke-dasharray="5 4"') +
    line('6,285 14,286 20,290 25,297 30,305 38,314 48,319 65,318 95,318 120,319 137,325 150,327 165,333 180,336 190,334 194,349 205,365 217,394 225,400 240,406 253,417 262,420 273,420 285,415 300,411 312,409 325,401 340,398 357,397 375,403 390,409 405,409 425,407 440,403 450,396 460,388 475,386 480,389 500,394 515,398 525,404 540,411 550,413 558,417 565,429 575,446', '#0f0', MA_DASH) +
    line('583,450 593,456', '#0f0', MA) +
    line('603,466 625,468 632,462 645,457 662,460 668,448 672,442 682,430 690,436 708,437 717,436 728,444 740,449 752,448 765,451 777,461 790,468 800,471 812,470 820,473 831,477', '#0f0', MA_DASH) +
    multiLine([
        ['m', '6,286 13,287 20,292 28,302 35,313 42,322 50,330 58,333'], ['c', '70,331 80,324 90,319 101,318'],
        ['m', '120,319 137,325 155,331 170,337 180,341'], ['c', '190,340'], ['m', '195,348 203,362 212,385 220,410 229,425 240,432 251,434'],
        ['c', '268,433 280,428 290,418 300,411 312,406 325,397 338,392 349,391'], ['m', '358,393 370,400 382,408 393,412 405,413'],
        ['c', '420,413 435,408 450,397 462,385 475,378'],
        ['m', '482,378 495,385 507,395 520,402 530,410 543,418 558,423 570,442 580,459 590,468 600,476 606,479'],
        ['c', '628,477 636,470 645,460 655,455 665,454 673,446 682,432 692,426'],
        ['m', '710,427 725,434 738,447 748,452 770,455 782,465 795,476 805,482 815,482'], ['c', '821,482'], ['m', '831,482']
    ], MA) +
    '<text x="8" y="92" style="fill:#a8a8a8;letter-spacing:-.08px">2014 © TD Ameritrade IP Company, Inc.</text>' +
    '<path d="M573 508l7 6h-6z" fill="#c8c8c8"/><rect x="565" y="513" width="50" height="15" rx="4" fill="#c8c8c8"/><text x="568" y="525" style="fill:#000">Lo: 1274</text>' +
    tags(886, [[97, '1304.1', '#f00'], [241, '1293.5', '#ffc800'], [264, '1291.8', '#f00'], [368, '1284.1', '#0f0'],
        [384, '1282.9', '#0f0'], [409, '1281.1', '#0ff'], [482, '1275.7', '#f00'], [505, '1274', '#0ff']]));

// ---------- gold: volume ----------
draw('vol-gc', frame({
    left: 5, right: 883, top: 562, bottom: 734, xs: gcX,
    ys: [[572, '8,000'], [613, '6,000'], [654, '4,000'], [694, '2,000'], [735, '0']]
}) + bars(`10:4w 15:1g 20:4r 24:41r 29:42r 34:11g 39:10r 44:2r 49:3g 58:9g 63:11w 68:2r 73:5g 78:3r 83:3g 88:1w 92:1r 97:5g 102:1r 107:3w
    112:9w 117:1r 121:2r 126:1r 131:4r 136:1g 155:4r 160:2g 165:16r 170:6r 175:11g 180:2g 185:2g 189:2g 194:167r 199:35g 204:16r 209:29r
    214:18r 218:8g 223:30g 228:23g 233:12r 238:8r 243:15r 248:17w 252:13g 257:13r 262:10g 267:22w 272:7g 277:5g 282:8g 286:28g 291:8g
    296:8r 301:7r 306:5g 311:9g 316:7g 320:9r 325:6g 330:5r 335:2g 340:2g 345:2r 350:2r 354:3r 359:1r 364:1g 369:5r 374:2g 379:2r 383:5r
    388:2r 393:3w 398:11g 403:4g 408:2r 412:6r 417:3g 422:1r 427:3g 432:1g 437:1g 442:2g 447:3g 451:4g 456:18g 461:1g 466:4r 471:4r 476:2r
    480:2r 485:4w 490:1g 495:3r 500:6r 505:6g 509:3g 514:3r 519:2r 524:4g 529:8r 534:8r 539:10r 543:18g 548:5w 553:4g 558:25r 563:77r
    568:46g 573:101g 577:25r 582:30g 587:13r 592:14r 597:21r 602:23g 606:10r 611:19g 616:17r 621:25g 626:10r 631:20g 636:26g 640:20r
    645:18g 650:19r 655:18w 660:76r 665:63g 670:60g 674:33r 679:19w 684:21r 689:9r 694:20r 699:7r 703:12g 708:12r 713:15g 718:14r
    723:12r 728:14r 733:9w 737:12g 742:7r 747:13g 752:8w 757:13r 762:11r 767:6r 771:8r 776:12r 781:21r 786:14g 791:9r 796:4g 801:4g
    805:12g 810:7g 815:6r 820:7w 825:5r 830:2r`, 734, 1));

// ---------- gold: oscillators ----------
function timeLabels(xs, labels) {
    return labels.map((t, i) => `<text x="${xs[i]}" y="949">${t}</text>`).join('');
}

// percent scale with the end labels cut by the plot edges
function percents(x) {
    return `<svg x="${x}" y="764" width="50" height="171" viewBox="${x} 764 50 171"><text x="${x}" y="770">100%</text><text x="${x}" y="939">0%</text></svg>`;
}
const pctYs = [[798, '80%'], [832, '60%'], [866, '40%'], [900, '20%']];

draw('adx-gc', frame({ left: 5, right: 883, top: 763, bottom: 935, xs: gcX, ys: pctYs }) + percents(885) +
    [840, 849, 877, 920].map(y => hline(6, 879, y, COLORS.k)).join('') +
    bars(`15:-2M 20:-9R 24:-27R 29:-43R 34:-49R 39:-52R 44:-52R 49:-48M 54:-42M 58:-30M 63:-18M 68:-12M 73:-6M 78:-3M 83:1G 88:5G 92:4G 97:7G
    102:9G 107:10G 112:13G 117:15G 121:13D 126:10D 131:5D 136:4D 141:5G 146:3D 150:1D 155:-2R 160:-3R 165:-5R 170:-9R 175:-5M 180:-1M 184:3G
    189:7G 194:-36R 199:-50R 204:-66R 209:-83R 214:-95R 218:-93M 223:-86M 228:-73M 233:-64M 238:-57M 243:-53M 248:-48M 252:-39M 257:-33M
    262:-22M 267:-13M 272:-2M 277:11G 282:25G 286:36G 291:45G 296:48G 301:42D 306:50G 311:56G 315:65G 320:68G 325:73G 330:68D 335:67D
    340:66D 345:61D 349:56D 354:47D 359:42D 364:36D 369:31D 374:28D 379:20D 383:14D 388:9D 393:5D 398:7G 403:7G 408:9G 412:7D 417:12G
    422:14G 427:16G 432:17G 437:21G 442:28G 446:35G 451:40G 456:43G 461:45G 466:45D 471:40D 476:32D 480:21D 485:12D 490:8D 495:3D 500:-6R
    505:-10R 509:-8R 514:-16R 519:-21R 524:-24R 529:-30R 534:-34R 539:-37R 543:-35M 548:-33M 553:-28M 558:-36R 563:-59R 568:-72R 573:-77R
    577:-79R 582:-67M 587:-60M 592:-62R 597:-64R 602:-54M 606:-46M 611:-33M 616:-31M 621:-24M 626:-18M 631:-5M 636:18G 640:26G 645:35G
    650:32D 655:31D 660:25D 665:40G 670:69G 674:73G 679:73G 684:72D 689:65D 694:55D 699:46D 703:46G 708:39D 713:35D 718:27D 723:21D 728:8D
    733:-2R 737:-4R 742:-7R 747:-4R 752:-4M 757:-7R 762:-11R 767:-12R 771:-14R 776:-19R 781:-29R 786:-33R 791:-39R 796:-38R 800:-35M
    805:-28M 810:-20M 815:-18M 820:-16M 825:-16M 830:-16M`, 840, 1) +
    rect(266, 816, 268, 840, '#888') + rect(610, 832, 612, 840, '#888') +
    multiLine([
        ['y', '6,900 15,900 20,897 28,880'],
        ['G', '35,863 45,850 55,841 65,845 80,851 95,858 107,865 118,868 126,867 136,862 152,859 165,849 180,837 189,832 200,814 213,791 223,780 237,774 250,767 262,764 272,769 282,775 288,785 296,796 310,813 320,832 335,856 350,876'],
        ['y', '363,886 377,889 393,885 405,893 422,905 437,914 442,914 452,909 465,898 478,897 490,907 505,912 515,919 522,920 535,917 545,909 554,905 563,893 570,880'],
        ['G', '577,865 590,856 600,846 606,844 612,846 630,846 635,852 645,865 655,872 660,872'],
        ['y', '665,878 678,887 690,894 700,904 715,912 728,920'], ['R', '738,924 750,931 760,934 773,934 780,930 787,923'],
        ['y', '800,911 812,910 820,906 830,901']
    ], CRISP) +
    multiLine([
        ['y', '6,845 20,845 30,840'],
        ['G', '40,836 52,833 70,834 100,837 125,838 155,837 175,833 190,831 205,825 220,821 250,817 265,817 285,818 295,823 310,826 325,833 340,838 350,840'],
        ['y', '375,843 400,842 420,846 440,848 455,846 470,844 480,845 505,848 525,850 545,847 555,847 570,841'],
        ['G', '577,837 595,835 612,833 630,834 645,838 655,840 665,840'], ['y', '690,844 710,847 725,849'],
        ['R', '745,850 770,853 785,851'], ['y', '800,847 815,847 830,845']
    ], CRISP) +
    multiLine([['p', '6,843 15,843 22,847 28,862 35,878 45,890 50,891 55,890 65,872 80,850 90,838 100,832 112,826 121,824 130,826 136,830 150,833 163,840 170,844 176,846 184,844 190,840 197,858 205,886 213,912 220,927 224,930 230,927 240,914 250,898 262,877 270,860 278,838 285,815 292,800 300,791 310,783 318,772 325,765 333,764 342,765 355,778 370,800 380,815 393,831 400,836 412,837 425,833 440,825 452,808 463,799 470,797 478,801 488,818 502,838 512,850 525,864 535,873 543,878 548,878 554,876 559,879 563,888 570,902 577,914 583,914 592,911 599,909 606,901 615,885 625,867 633,848 640,832 646,816 652,809 660,806 665,800 670,786 677,770 685,764 690,764 700,774 715,793 725,810 735,830 743,842 755,849 768,853 778,860 788,871 795,877 800,879 806,877 815,868 830,860']], CRISP) +
    timeLabels(gcX, ['23', 'Thu', '1', '2', '3', '4', '5', '6', '7', '8', '9', '10', '11', '12', '13']));

// ---------- russell: price ----------
const tfX = [991, 1039, 1087, 1135, 1183, 1231, 1279, 1327, 1375, 1424, 1472, 1520, 1568, 1616, 1664, 1712, 1760, 1808];
const tfCandles = `
967 269 285 270 284 r; 971 268 286 270 285 g; 987 270 285 271 280 r; 995 278 284 279 282 r; 1003 269 281 279 281 w; 1011 264 276 267 273 g;
1027 266 288 268 284 r; 1035 280 299 285 296 r; 1043 298 340 299 321 r; 1051 318 337 322 324 w; 1059 313 322 314 321 g; 1067 308 315 311 314 w;
1075 300 317 308 312 g; 1083 275 308 285 306 g; 1091 273 290 276 284 g; 1099 274 285 276 282 g; 1107 270 282 272 281 r; 1115 274 286 276 281 g;
1123 274 283 277 281 g; 1131 272 281 273 277 g; 1139 276 282 277 281 r; 1147 280 288 281 285 g; 1155 284 290 287 289 r; 1163 286 293 288 291 r;
1171 290 293 291 293 w; 1179 286 293 288 291 r; 1187 281 287 282 286 r; 1195 272 282 274 279 g; 1203 270 281 271 280 r; 1211 280 286 281 285 g;
1219 276 290 280 282 r; 1227 280 291 282 288 r; 1235 282 293 284 290 r; 1243 286 295 289 293 g; 1251 284 294 285 291 g; 1259 276 286 277 282 r;
1267 267 284 278 282 g; 1275 276 284 278 282 r; 1283 276 284 278 281 g; 1291 276 290 277 281 g; 1299 272 282 275 280 g; 1307 269 278 271 276 g;
1315 268 275 271 273 r; 1323 269 275 271 273 w; 1331 270 297 271 288 r; 1339 281 293 285 288 g; 1347 278 290 281 287 r; 1363 270 284 278 280 w;
1371 280 305 283 285 w; 1379 281 291 283 288 r; 1387 284 300 287 296 r; 1395 286 298 290 296 g; 1403 277 291 282 287 g; 1411 275 289 280 286 r;
1420 273 297 275 286 g; 1428 242 297 252 278 g; 1436 234 344 252 321 r; 1444 302 337 320 322 w; 1452 302 331 320 322 w; 1460 295 323 306 321 g;
1468 293 350 306 331 r; 1476 304 412 339 407 r; 1484 403 478 406 469 r; 1492 448 484 450 467 g; 1500 406 457 411 453 g; 1508 371 420 384 410 g;
1516 371 401 386 389 r; 1524 341 397 347 387 g; 1532 306 348 324 348 g; 1540 318 342 326 342 r; 1548 332 352 339 352 r; 1556 330 351 344 350 g;
1564 320 346 341 343 w; 1572 324 342 326 342 g; 1580 308 327 314 327 g; 1588 275 315 283 315 g; 1596 275 300 283 300 r; 1604 291 302 297 299 g;
1612 293 309 297 302 r; 1620 277 305 279 302 g; 1628 271 289 280 282 r; 1636 267 285 271 282 g; 1644 266 290 271 285 r; 1652 275 290 279 285 g;
1660 275 294 275 290 r; 1668 282 294 287 291 g; 1676 283 305 286 293 r; 1684 265 295 266 294 g; 1692 238 267 254 267 g; 1700 248 261 256 259 r;
1708 249 269 255 259 g; 1716 244 270 254 270 r; 1724 251 277 254 270 g; 1732 248 263 250 256 g; 1740 238 254 246 251 g; 1748 242 258 244 250 r;
1756 248 259 248 259 r`;

draw('price-tf',
    frame({
        left: 964, right: 1843, top: 76, bottom: 533, xs: tfX,
        ys: [[91, '1164'], [129, '1162'], [168, '1160'], [207, '1158'], [246, '1156'], [285, ''], [324, '1152'], [363, ''],
            [402, '1148'], [441, '1146'], [479, '1144'], [518, '1142']]
    }) +
    rect(1468, 235, 1532, 252, '#4c0000') + rect(1548, 235, 1564, 252, '#4c0000') + rect(1708, 238, 1724, 252, '#4c0000') +
    rect(1500, 467, 1634, 483, '#004c00') + rect(1393, 295, 1428, 299, '#006400') +
    candles(tfCandles, 5) +
    rect(967, 76, 1424, 533, SESSION) +
    dots(971, 1838, 97, 8, '#f00') + dots(971, 1838, 282, 8, '#ffc800') + dots(971, 1838, 466, 8, '#0f0') +
    line('965,313 970,313 978,305 1012,305 1020,299 1040,299', '#00dc00', RED_DASH) +
    line('1075,285 1080,305 1083,328 1085,341 1090,326 1098,320 1125,318 1186,318 1203,309 1262,308 1275,304 1300,304 1318,301 1325,297 1371,297', '#00dc00', RED_DASH) +
    line('1371,297 1424,297', '#0f0', RED_DASH) +
    line('1037,290 1042,266 1046,266 1052,283 1072,283', '#f00', RED_DASH) +
    rect(965, 265, 1371, 367, 'rgba(0,0,140,.58)') +
    hline(965, 1372, 264, '#0f0') + hline(965, 1372, 367, '#0f0') +
    hline(1033, 1843, 208, '#ffc800', 2) + hline(1460, 1836, 234, '#00f0ff', 2) + hline(1460, 1836, 343, '#00f0ff', 2) +
    line('1428,297 1430,250 1433,215 1436,181 1440,210 1445,243 1470,245 1478,260 1483,295 1491,343 1491,350 1516,350', '#f00', 'stroke-width="1.800" stroke-dasharray="6 5"') +
    line('1516,350 1518,400 1521,450 1524,515 1529,490 1534,470 1540,467 1572,466 1578,460 1587,447 1594,420', '#0f0', 'stroke-width="1.800" stroke-dasharray="7 5"') +
    line('1620,413 1630,387 1637,375 1643,372 1660,368 1667,362 1680,361 1685,358 1688,343 1693,327 1698,321 1725,321 1732,320 1740,312 1758,312', '#0f0', 'stroke-width="1.800" stroke-dasharray="7 5"') +
    line('965,269 1005,267 1022,265', '#0f0') +
    line('965,284 985,279 1005,280 1018,275 1030,277 1043,290 1053,297 1073,304 1083,300 1092,295 1107,290 1130,286 1145,282 1165,285 1180,288 1200,284 1225,287 1245,286 1290,280 1325,276 1345,279 1370,281 1395,287 1415,285 1430,281', '#0f0', MA_DASH) +
    line('1430,280 1433,287 1442,291 1455,300 1468,308 1475,325 1483,350 1492,378 1500,387 1517,388 1530,372 1540,361 1560,355 1575,345 1590,325 1600,317 1615,310 1630,300 1640,293 1655,288 1680,288 1690,280 1700,275 1712,269 1725,265 1735,260 1752,256', '#00dc00', MA_DASH) +
    multiLine([
        ['c', '965,265 980,264'], ['m', '1000,266 1025,269 1036,274 1046,284 1060,300 1075,311 1083,313'],
        ['c', '1100,308 1120,293 1137,278 1148,274 1155,274'], ['m', '1170,278 1185,283 1200,284'], ['c', '1211,284'],
        ['m', '1243,286'], ['c', '1275,283 1300,279 1320,275 1332,274'], ['m', '1345,276 1370,279 1390,285 1405,287'],
        ['c', '1412,288 1430,284'], ['m', '1436,284 1447,291 1460,299 1470,308 1477,322 1485,345 1493,373 1502,400 1510,420 1516,429'],
        ['c', '1525,429 1533,421 1545,400 1560,368 1575,343 1590,318 1600,304 1615,290 1633,277 1648,269 1660,268'],
        ['m', '1672,270 1684,272'], ['c', '1700,268 1715,262 1730,257 1745,250 1757,247']
    ], MA) +
    '<text x="967" y="92" style="fill:#a8a8a8;letter-spacing:-.08px">2014 © TD Ameritrade IP Company, Inc.</text>' +
    tags(1846, [[97, '1163.7', '#f00'], [234, '1156.6', '#0ff'], [258, '1155.4', '#f00'], [282, '1154.2', '#ffc800'],
        [343, '1151', '#0ff'], [367, '1149.8', '#0f0'], [466, '1144.7', '#0f0']]));

// ---------- russell: volume ----------
draw('vol-tf', frame({
    left: 964, right: 1843, top: 562, bottom: 734, xs: tfX,
    ys: [[585, '5,000'], [615, '4,000'], [645, '3,000'], [675, '2,000'], [705, '1,000'], [735, '0']]
}) + bars(`971:1g 1035:1r 1043:8r 1051:5w 1083:5g 1267:1g 1291:2g 1307:1g 1315:1r 1331:4r 1339:2g 1347:1g 1355:3g 1363:2w 1371:1w 1379:3r 1387:4r
    1395:1g 1403:4g 1412:3r 1420:5g 1428:78g 1436:121r 1444:42w 1452:54w 1460:60g 1468:49r 1476:137r 1484:167r 1492:133g 1500:112g 1508:69g
    1516:48r 1524:65g 1532:83g 1540:40r 1548:26r 1556:22g 1564:32w 1572:22g 1580:30g 1588:43g 1596:23r 1604:19g 1612:25r 1620:29g 1628:22r
    1636:19g 1644:32r 1652:20g 1660:13r 1668:17g 1676:17r 1684:12g 1692:47g 1700:8r 1708:15g 1716:8r 1724:12g 1732:9g 1740:14g 1748:11r 1756:7r`, 734, 3));

// ---------- russell: oscillators ----------
draw('adx-tf', frame({ left: 964, right: 1843, top: 763, bottom: 935, xs: tfX, ys: pctYs }) + percents(1845) +
    [819, 834, 840, 914].map(y => hline(965, 1837, y, COLORS.k)).join('') +
    bars(`971:30D 979:29D 987:23D 995:17D 1003:13D 1011:12D 1019:12D 1027:5D 1035:-3R 1043:-16R 1051:-26R 1059:-30R 1067:-31R 1075:-30M 1083:-20M
    1091:-13M 1099:-8M 1107:-4M 1115:-1M 1123:1G 1131:3G 1139:2D 1147:1R 1155:-2R 1163:-5R 1171:-6R 1179:-8R 1187:-7M 1195:-2M 1203:-1M 1211:-1M
    1219:-3R 1227:-4R 1235:-8R 1243:-8R 1251:-4M 1259:-3M 1267:-1M 1275:-1M 1283:-1M 1299:1G 1307:3G 1315:3G 1323:4G 1331:1D 1339:-2R 1347:-2R
    1355:-2R 1363:-3R 1371:-4R 1379:-5R 1387:-9R 1395:-9R 1403:-7M 1412:-7M 1420:-2M 1428:6G 1436:-7R 1444:-16R 1452:-22R 1460:-21M 1468:-26R
    1476:-51R 1484:-85R 1492:-99R 1500:-94M 1508:-78M 1516:-65M 1524:-41M 1532:-16M 1540:-2M 1548:4G 1556:13G 1564:19G 1572:28G 1580:37G
    1588:52G 1596:57G 1604:59G 1612:58D 1620:61G 1628:61D 1636:62G 1644:57D 1652:53D 1660:46D 1668:41D 1676:33D 1684:34G 1692:37G 1700:36D
    1708:35D 1716:29D 1724:27D 1732:26D 1740:25D 1748:21D 1756:16D`, 834, 3) +
    multiLine([
        ['G', '965,770 979,765 988,767 1003,775 1020,777 1035,802 1058,802 1067,808 1075,810'],
        ['y', '1087,828 1105,845 1120,858 1140,876 1155,894 1165,901 1179,912'], ['R', '1187,914'], ['y', '1203,911 1212,915'],
        ['R', '1235,931 1243,934 1260,934 1273,925 1284,917 1299,916'], ['y', '1312,908 1323,902 1340,907 1347,911'],
        ['R', '1363,919 1379,922 1395,917 1412,929 1420,933 1428,923 1436,923 1452,922 1460,925 1468,918'],
        ['y', '1476,900 1485,872 1495,857 1503,854 1516,858 1530,870 1543,879 1560,895 1572,904 1581,905 1590,900 1605,893 1612,892 1635,879 1652,873 1668,871 1676,875 1685,874 1700,862 1716,859 1732,862 1740,860 1757,861']
    ], CRISP) +
    multiLine([
        ['G', '965,830 1000,831 1040,832 1075,834'], ['y', '1110,837 1150,839 1211,840'], ['R', '1243,842 1299,840'],
        ['y', '1330,839 1347,840'], ['R', '1380,842 1430,841 1468,841'], ['y', '1480,839 1493,836 1516,836 1550,839 1612,839 1650,837 1700,837 1757,836']
    ], CRISP) +
    multiLine([['p', '965,794 980,798 995,807 1005,814 1020,820 1035,831 1045,845 1055,857 1065,863 1076,867 1090,863 1105,853 1120,843 1135,837 1145,834 1160,836 1180,840 1212,837 1243,840 1275,838 1300,834 1323,832 1345,834 1370,838 1400,842 1420,842 1429,837 1436,840 1450,848 1467,856 1475,865 1482,883 1490,905 1498,918 1508,922 1517,918 1525,907 1540,873 1555,845 1565,829 1580,806 1592,787 1605,774 1618,767 1635,765 1652,767 1665,775 1675,784 1685,791 1705,795 1725,804 1740,807 1757,814']], CRISP) +
    timeLabels(tfX, ['5:00', '5:30', '6:00', '6:30', '7:00', '7:30', '8:00', '8:30', '9:00', '9:30', '10:00', '10:30', '11:00', '11:30', '12:00', '12:30', '13:00', '13:30']));

// ---------- annotation arrows ----------
function arrow(x1, y1, x2, y2) {
    const len = Math.hypot(x2 - x1, y2 - y1);
    const angle = Math.atan2(y2 - y1, x2 - x1) * 180 / Math.PI;
    return `<path transform="translate(${x1} ${y1}) rotate(${angle})" fill="#f00"
        d="M0-5A5 5 0 0 0 0 5L${len - 16} 3.500L${len - 19} 10L${len} 0L${len - 19}-10L${len - 16}-3.500z"/>`;
}

draw('arrows', arrow(620, 307, 670, 389) + arrow(589, 482, 495, 527) + arrow(1498, 219, 1448, 294) + arrow(1526, 389, 1622, 422));
```
